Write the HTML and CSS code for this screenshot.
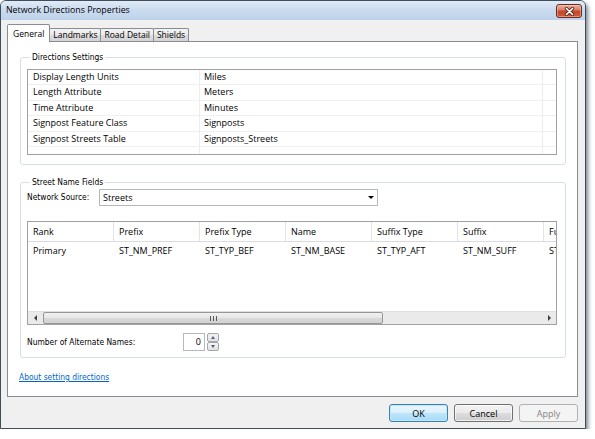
FILE: index.html
```html
<!DOCTYPE html>
<html>
<head>
<meta charset="utf-8">
<title>Network Directions Properties</title>
<link rel="stylesheet" href="styles.css">
</head>
<body>
<div class="window">
  <div class="titlebar">
    <span class="title">Network Directions Properties</span>
    <button class="close" aria-label="Close">
      <svg width="11" height="9" viewBox="0 0 11 9"><path d="M2.5 1.5 L8.5 7.5 M8.5 1.5 L2.5 7.5" stroke="#5a2218" stroke-width="3.2" stroke-linecap="round" fill="none"/><path d="M2.5 1.5 L8.5 7.5 M8.5 1.5 L2.5 7.5" stroke="#ffffff" stroke-width="1.7" stroke-linecap="round" fill="none"/></svg>
    </button>
  </div>
  <div class="client">
    <div class="tabs">
      <div class="tab tab-active">General</div>
      <div class="tab">Landmarks</div>
      <div class="tab">Road Detail</div>
      <div class="tab">Shields</div>
    </div>
    <div class="panel">
      <div class="group group-directions">
        <div class="group-title">Directions Settings</div>
        <div class="listbox">
          <div class="lrow"><div class="lc1">Display Length Units</div><div class="lc2">Miles</div><div class="lc3"></div></div>
          <div class="lrow"><div class="lc1">Length Attribute</div><div class="lc2">Meters</div><div class="lc3"></div></div>
          <div class="lrow"><div class="lc1">Time Attribute</div><div class="lc2">Minutes</div><div class="lc3"></div></div>
          <div class="lrow"><div class="lc1">Signpost Feature Class</div><div class="lc2">Signposts</div><div class="lc3"></div></div>
          <div class="lrow"><div class="lc1">Signpost Streets Table</div><div class="lc2">Signposts_Streets</div><div class="lc3"></div></div>
          <div class="lrow lrow-empty"><div class="lc1"></div><div class="lc2"></div><div class="lc3"></div></div>
        </div>
      </div>

      <div class="group group-streets">
        <div class="group-title">Street Name Fields</div>
        <div class="source-row">
          <span class="label source-label">Network Source:</span>
          <div class="combo"><span>Streets</span><span class="combo-arrow"></span></div>
        </div>
        <div class="grid">
          <div class="grow grow-head">
            <div class="gc">Rank</div><div class="gc">Prefix</div><div class="gc">Prefix Type</div><div class="gc">Name</div><div class="gc">Suffix Type</div><div class="gc">Suffix</div><div class="gc">Full Name</div>
          </div>
          <div class="grow grow-data">
            <div class="gc">Primary</div><div class="gc">ST_NM_PREF</div><div class="gc">ST_TYP_BEF</div><div class="gc">ST_NM_BASE</div><div class="gc">ST_TYP_AFT</div><div class="gc">ST_NM_SUFF</div><div class="gc">ST_NM_FULL</div>
          </div>
          <div class="grid-space"></div>
          <div class="hscroll">
            <div class="sb-btn"><span class="tri-left"></span></div>
            <div class="sb-track"><div class="sb-thumb"><span class="grip"></span></div></div>
            <div class="sb-btn"><span class="tri-right"></span></div>
          </div>
        </div>
        <div class="alt-row">
          <span class="label alt-label">Number of Alternate Names:</span>
          <div class="spin-input">0</div>
          <div class="spin-btns">
            <div class="spin-btn"><span class="tri-up"></span></div>
            <div class="spin-btn"><span class="tri-down"></span></div>
          </div>
        </div>
      </div>

      <a class="help-link" href="#">About setting directions</a>
    </div>
    <div class="buttons">
      <button class="btn btn-default">OK</button>
      <button class="btn">Cancel</button>
      <button class="btn" disabled>Apply</button>
    </div>
  </div>
</div>
</body>
</html>
```
FILE: styles.css
```css
* { box-sizing: border-box; }

body {
  margin: 0;
  background: #ffffff;
  font-family: "Open Sans", "Liberation Sans", sans-serif;
  font-size: 9px;
  color: #000000;
}

.window {
  width: 586px;
  height: 429px;
  border: 1px solid #3e4f5c;
  border-radius: 6px 6px 0 0;
  background: #f0f0f0;
  box-shadow: 2px 3px 4px rgba(0, 30, 45, 0.55);
  display: flex;
  flex-direction: column;
  overflow: hidden;
}

.titlebar {
  height: 19px;
  flex: none;
  display: flex;
  align-items: flex-start;
  justify-content: space-between;
  padding: 0 3px 0 5px;
  background: linear-gradient(#e2ebf6, #cbdcef 45%, #bdd2ea);
}

.title {
  font-size: 8.8px;
  line-height: 19px;
}

.close {
  width: 26px;
  height: 14px;
  margin-top: 3px;
  padding: 0;
  border: 1px solid #6b2a20;
  border-radius: 3px;
  background: linear-gradient(#eab0a2, #d9806b 40%, #c5452a 52%, #cf5a36 100%);
  box-shadow: inset 0 0 0 1px rgba(255, 220, 210, 0.45);
  display: flex;
  align-items: center;
  justify-content: center;
}

.client {
  flex: 1;
  display: flex;
  flex-direction: column;
  padding: 4px 7px 0 6px;
}

.tabs {
  height: 17px;
  display: flex;
  align-items: flex-end;
  position: relative;
  z-index: 1;
}

.tab {
  height: 13px;
  padding: 0 3px;
  margin-left: -1px;
  border: 1px solid #898c95;
  border-bottom: none;
  border-radius: 2px 2px 0 0;
  background: linear-gradient(#f3f3f3, #ebebeb 50%, #dedede 50%, #d3d3d3);
  font-size: 8.5px;
  line-height: 12px;
  white-space: nowrap;
}

.tab-active {
  height: 18px;
  margin-left: 0;
  margin-bottom: -1px;
  padding: 0 5px;
  background: #ffffff;
  line-height: 17px;
}

.panel {
  height: 356px;
  flex: none;
  background: #ffffff;
  border: 1px solid #898c95;
  padding: 15px 11px 0 12px;
  display: flex;
  flex-direction: column;
}

.group {
  border: 1px solid #d5dfe5;
  border-radius: 3px;
  padding: 0 8px 9px 6px;
}

.group-streets {
  margin-top: 17px;
  padding-bottom: 6px;
}

.group-title,
.label,
.help-link {
  font-family: "DejaVu Sans Condensed", "DejaVu Sans", sans-serif;
  font-size: 8.4px;
}

.group-title {
  width: fit-content;
  margin: -7px 0 0 3px;
  padding: 0 2px;
  background: #ffffff;
  line-height: 12px;
}

.listbox {
  margin-top: 6px;
  height: 86px;
  border: 1px solid #9ea1a8;
  display: flex;
  flex-direction: column;
}

.lrow {
  display: flex;
  height: 15.4px;
  flex: none;
  border-bottom: 1px solid #f0f0f0;
  line-height: 14px;
}

.lrow-empty {
  flex: 1;
  border-bottom: none;
}

.lc1 {
  width: 172px;
  padding-left: 5px;
  border-right: 1px solid #ececec;
}

.lc2 {
  width: 343px;
  padding-left: 4px;
  border-right: 1px solid #ececec;
}

.lc3 { flex: 1; }

.source-row {
  margin-top: 1px;
  display: flex;
  align-items: center;
}

.source-label {
  width: 72px;
  line-height: 17px;
}

.combo {
  width: 279px;
  height: 17px;
  border: 1px solid #b5b8bf;
  background: #ffffff;
  display: flex;
  align-items: center;
  justify-content: space-between;
  padding: 0 3px 0 3px;
}

.combo-arrow {
  width: 0;
  height: 0;
  border-left: 3px solid transparent;
  border-right: 3px solid transparent;
  border-top: 3px solid #000000;
}

.grid {
  margin-top: 15px;
  height: 104px;
  border: 1px solid #9ea1a8;
  display: flex;
  flex-direction: column;
  overflow: hidden;
}

.grow {
  display: flex;
  flex: none;
}

.grow-head {
  height: 20px;
  border-bottom: 1px solid #d9dbe0;
  line-height: 19px;
}

.grow-head .gc {
  border-right: 1px solid #e3e4e7;
}

.grow-data {
  height: 17px;
  line-height: 17px;
}

.gc {
  width: 86px;
  flex: none;
  padding-left: 5px;
  white-space: nowrap;
  overflow: hidden;
}

.grid-space { flex: 1; }

.hscroll {
  height: 13px;
  flex: none;
  display: flex;
  background: #eaeaea;
  border-top: 1px solid #e0e0e0;
}

.sb-btn {
  width: 14px;
  display: flex;
  align-items: center;
  justify-content: center;
}

.tri-left {
  width: 0; height: 0;
  border-top: 3px solid transparent;
  border-bottom: 3px solid transparent;
  border-right: 3px solid #404040;
}

.tri-right {
  width: 0; height: 0;
  border-top: 3px solid transparent;
  border-bottom: 3px solid transparent;
  border-left: 3px solid #404040;
}

.sb-track {
  flex: 1;
  padding: 0 0 0 1px;
}

.sb-thumb {
  width: 340px;
  height: 100%;
  border: 1px solid #979797;
  border-radius: 2px;
  background: linear-gradient(#f1f1f1, #e6e6e6 50%, #d9d9d9 50%, #d2d2d2);
  display: flex;
  align-items: center;
  justify-content: center;
}

.grip {
  width: 7px;
  height: 5px;
  background: repeating-linear-gradient(90deg, #5a5a5a 0 1px, transparent 1px 3px);
}

.alt-row {
  margin-top: 8px;
  display: flex;
  align-items: center;
}

.alt-label {
  width: 156px;
  line-height: 18px;
}

.spin-input {
  width: 22px;
  height: 18px;
  border: 1px solid #b5b8bf;
  text-align: right;
  padding-right: 3px;
  line-height: 16px;
}

.spin-btns {
  margin-left: 2px;
  display: flex;
  flex-direction: column;
}

.spin-btn {
  width: 12px;
  height: 9px;
  border: 1px solid #a6a6a6;
  border-radius: 2px;
  background: linear-gradient(#f4f4f4, #e2e2e2);
  display: flex;
  align-items: center;
  justify-content: center;
}

.tri-up {
  width: 0; height: 0;
  border-left: 2.5px solid transparent;
  border-right: 2.5px solid transparent;
  border-bottom: 3px solid #4d6185;
}

.tri-down {
  width: 0; height: 0;
  border-left: 2.5px solid transparent;
  border-right: 2.5px solid transparent;
  border-top: 3px solid #4d6185;
}

.help-link {
  margin: 13px 0 0 -1px;
  width: fit-content;
  line-height: 12px;
  color: #0066cc;
  text-decoration: underline;
}

.buttons {
  margin-top: 7px;
  display: flex;
  justify-content: flex-end;
  gap: 6px;
}

.btn {
  width: 59px;
  height: 18px;
  padding: 0;
  border: 1px solid #707070;
  border-radius: 3px;
  background: linear-gradient(#f2f2f2, #ebebeb 50%, #dddddd 50%, #cfcfcf);
  box-shadow: inset 0 0 0 1px rgba(255, 255, 255, 0.7);
  font-family: "Open Sans", "Liberation Sans", sans-serif;
  font-size: 9px;
  color: #000000;
}

.btn-default {
  border-color: #3c7fb1;
  background: linear-gradient(#eaf6fd, #d9f0fc 50%, #bee6fd 50%, #a7d9f5);
  box-shadow: inset 0 0 0 1px #c2e8fb;
}

.btn:disabled {
  border-color: #adb2b5;
  background: #f4f4f4;
  box-shadow: none;
  color: #838383;
}
```
